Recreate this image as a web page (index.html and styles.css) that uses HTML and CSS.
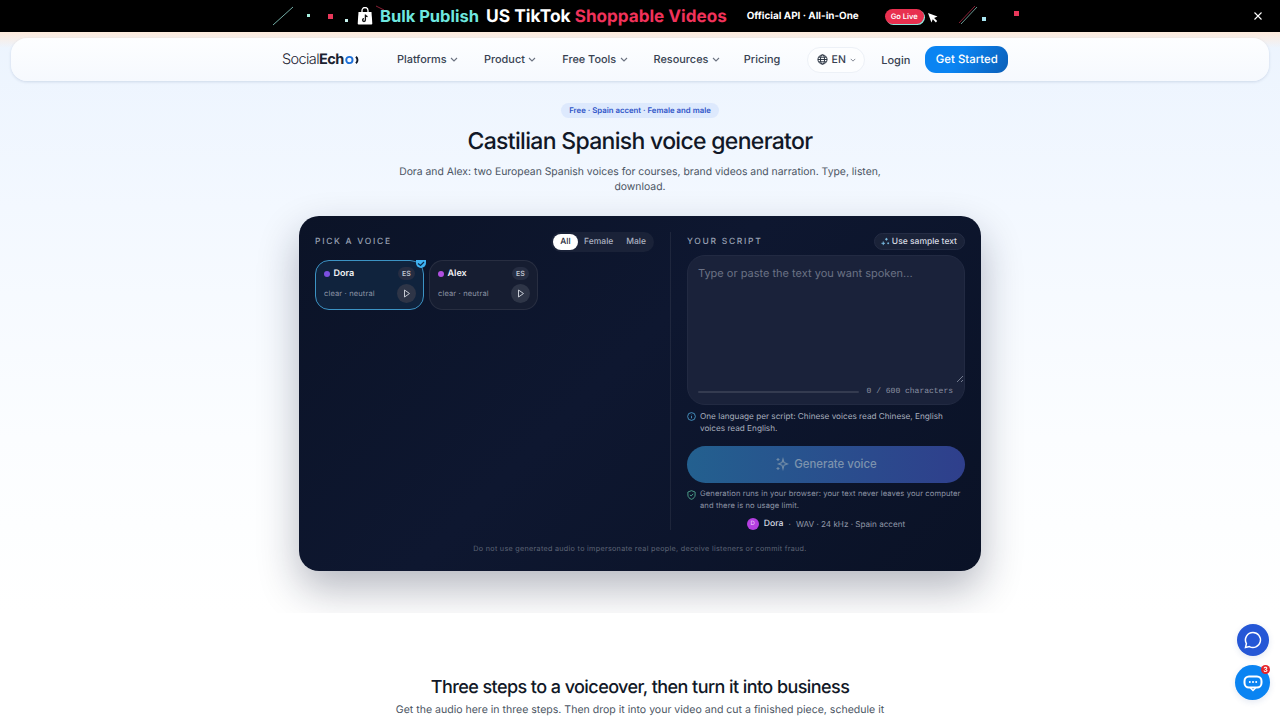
FILE: index.html
```html
<!DOCTYPE html>
<html lang="en">
  <head>
    <meta charset="UTF-8" />
    <meta name="viewport" content="width=device-width, initial-scale=1.0" />
    <title>Castilian Spanish voice generator</title>
    <link rel="stylesheet" href="styles.css">
  </head>
  <body>
    <div class="promo">
      <svg class="promo-decor" width="1280" height="32" viewBox="0 0 1280 32">
        <path d="M273 25L293 7" stroke="#8fd8cf" stroke-width="0.8"/>
        <path d="M376 6L384 10" stroke="#e8385a" stroke-width="0.6"/>
        <rect x="307" y="14" width="3" height="3" fill="#a8f0e0"/>
        <rect x="328" y="14" width="5" height="5" fill="#e8385a"/>
        <rect x="345" y="19" width="3" height="3" fill="#c8f4f0"/>
        <path d="M959 23L975 6" stroke="#e8385a" stroke-width="0.6"/>
        <path d="M961 24L977 7" stroke="#9ad8d0" stroke-width="0.7"/>
        <rect x="982" y="17" width="4" height="4" fill="#a8e4f0"/>
        <rect x="1014" y="11" width="5" height="5" fill="#e8385a"/>
      </svg>
      <div class="promo-inner">
        <svg class="promo-bag" width="16" height="18" viewBox="0 0 16 18">
          <path d="M5 5V3.5a3 3 0 0 1 6 0V5" fill="none" stroke="#fff" stroke-width="1.3"/>
          <path d="M1.500 5h13l.8 11.5a1 1 0 0 1-1 1H1.700a1 1 0 0 1-1-1z" fill="#fff"/>
          <path d="M8.400 7.500v5.600a1.400 1.400 0 1 1-1.400-1.400M8.400 7.500c.2 1.300 1 2 2.200 2.100" fill="none" stroke="#111" stroke-width="1.3"/>
        </svg>
        <span class="promo-title"><span class="teal">Bulk Publish</span> <span class="white">US TikTok</span> <span class="red">Shoppable Videos</span></span>
        <span class="promo-sub">Official API · All-in-One</span>
        <span class="promo-live">Go Live</span>
        <svg class="promo-cursor" width="10" height="10" viewBox="0 0 10 10">
          <path d="M0 0l9.500 3.600-3.400 1.300 3 3.200-1.200 1.300-3.100-3.200L3.400 9.500z" fill="#fff"/>
        </svg>
      </div>
      <svg class="promo-close" width="8" height="8" viewBox="0 0 8 8">
        <path d="M.5.5l7 7M7.500.5l-7 7" stroke="#fff" stroke-width="1.1"/>
      </svg>
    </div>

    <div class="hero-bg">
      <header class="nav">
        <div class="nav-inner">
          <div class="logo">Social<b>Ech</b><svg width="14" height="10" viewBox="0 0 16 10"><circle cx="5" cy="5" r="3.600" fill="none" stroke="#1d6fd8" stroke-width="2.200"/><path d="M12.500 1.200a5 5 0 0 1 0 7.600" fill="none" stroke="#0d1626" stroke-width="2.200"/></svg></div>
          <nav class="nav-links">
            <a class="nav-link">Platforms <svg class="chev" width="8" height="5" viewBox="0 0 8 5"><path d="M1 1l3 3 3-3"/></svg></a>
            <a class="nav-link">Product <svg class="chev" width="8" height="5" viewBox="0 0 8 5"><path d="M1 1l3 3 3-3"/></svg></a>
            <a class="nav-link">Free Tools <svg class="chev" width="8" height="5" viewBox="0 0 8 5"><path d="M1 1l3 3 3-3"/></svg></a>
            <a class="nav-link">Resources <svg class="chev" width="8" height="5" viewBox="0 0 8 5"><path d="M1 1l3 3 3-3"/></svg></a>
            <a class="nav-link">Pricing</a>
          </nav>
          <div class="lang">
            <svg width="11" height="11" viewBox="0 0 12 12" fill="none" stroke="#1f2937" stroke-width="1"><circle cx="6" cy="6" r="5"/><ellipse cx="6" cy="6" rx="2.200" ry="5"/><path d="M1 6h10M1.700 3.500h8.600M1.700 8.500h8.600"/></svg>
            EN
            <svg class="chev" width="6" height="4" viewBox="0 0 8 5"><path d="M1 1l3 3 3-3"/></svg>
          </div>
          <a class="login">Login</a>
          <a class="cta">Get Started</a>
        </div>
      </header>

      <section class="hero">
        <span class="badge">Free · Spain accent · Female and male</span>
        <h1>Castilian Spanish voice generator</h1>
        <p class="lead">Dora and Alex: two European Spanish voices for courses, brand videos and narration. Type, listen, download.</p>

        <div class="studio">
          <div class="studio-cols">
            <div class="col-left">
              <div class="col-head">
                <span class="label">PICK A VOICE</span>
                <div class="filter">
                  <span class="filter-item active">All</span>
                  <span class="filter-item">Female</span>
                  <span class="filter-item">Male</span>
                </div>
              </div>
              <div class="voices">
                <div class="voice selected">
                  <span class="voice-check"><svg width="8" height="6" viewBox="0 0 8 6"><path d="M1 2.500l2.500 2L7 1" fill="none" stroke="#0c2a4a" stroke-width="1.3"/></svg></span>
                  <div class="voice-row">
                    <span class="voice-name"><i class="dot violet"></i>Dora</span>
                    <span class="voice-tag">ES</span>
                  </div>
                  <div class="voice-row">
                    <span class="voice-desc">clear · neutral</span>
                    <span class="voice-play"><svg width="8" height="9" viewBox="0 0 8 9"><path d="M1.500 1l5 3.500-5 3.500z" fill="none" stroke="#c5cad3" stroke-width="1"/></svg></span>
                  </div>
                </div>
                <div class="voice">
                  <div class="voice-row">
                    <span class="voice-name"><i class="dot purple"></i>Alex</span>
                    <span class="voice-tag">ES</span>
                  </div>
                  <div class="voice-row">
                    <span class="voice-desc">clear · neutral</span>
                    <span class="voice-play"><svg width="8" height="9" viewBox="0 0 8 9"><path d="M1.500 1l5 3.500-5 3.500z" fill="none" stroke="#c5cad3" stroke-width="1"/></svg></span>
                  </div>
                </div>
              </div>
            </div>

            <div class="col-right">
              <div class="col-head">
                <span class="label">YOUR SCRIPT</span>
                <span class="sample">
                  <svg width="9" height="9" viewBox="0 0 10 10" fill="none" stroke="#7fc4ea" stroke-width="1"><path d="M6 1v3M4.500 2.500h3M2.500 5v4M.5 7h4M8 6v2M7 7h2"/></svg>
                  Use sample text
                </span>
              </div>
              <div class="script-box">
                <div class="placeholder">Type or paste the text you want spoken...</div>
                <div class="script-foot">
                  <span class="script-bar"></span>
                  <span class="script-count">0 / 600 characters</span>
                </div>
                <svg class="resize" width="8" height="8" viewBox="0 0 8 8"><path d="M1 7l6-6M5 7l2-2" stroke="#8a92a3" stroke-width="0.8"/></svg>
              </div>
              <div class="note">
                <svg width="9" height="9" viewBox="0 0 10 10" fill="none" stroke="#4fa6d8" stroke-width="0.9"><circle cx="5" cy="5" r="4.300"/><path d="M5 4.500v2.500M5 3v.6"/></svg>
                <span>One language per script: Chinese voices read Chinese, English voices read English.</span>
              </div>
              <button class="generate" type="button">
                <svg width="14" height="14" viewBox="0 0 14 14" fill="none" stroke="#6f8aa6" stroke-width="1.100"><path d="M8 2l1 3.500L12.500 7 9 8.200 8 12 7 8.200 3.500 7 7 5.500zM3 1v3M1.500 2.500h3M3 10v3M1.500 11.500h3"/></svg>
                Generate voice
              </button>
              <div class="note privacy">
                <svg width="9" height="10" viewBox="0 0 10 11" fill="none" stroke="#58b79a" stroke-width="0.9"><path d="M5 .7l4 1.500v3.300c0 2.400-1.700 4-4 4.800-2.300-.8-4-2.400-4-4.800V2.200z"/><path d="M3.200 5.300l1.400 1.300 2.300-2.400"/></svg>
                <span>Generation runs in your browser: your text never leaves your computer and there is no usage limit.</span>
              </div>
              <div class="summary">
                <span class="avatar">D</span>
                <span class="summary-name">Dora</span>
                <span class="summary-sep">·</span>
                <span>WAV · 24 kHz · Spain accent</span>
              </div>
            </div>
          </div>
          <p class="disclaimer">Do not use generated audio to impersonate real people, deceive listeners or commit fraud.</p>
        </div>
      </section>
    </div>

    <section class="steps">
      <h2>Three steps to a voiceover, then turn it into business</h2>
      <p>Get the audio here in three steps. Then drop it into your video and cut a finished piece, schedule it</p>
    </section>

    <a class="float-btn chat">
      <svg width="20" height="20" viewBox="0 0 20 20" fill="none" stroke="#fff" stroke-width="1.500"><path d="M10 2.500a7.500 7.500 0 1 1-3.600 14.100L2.500 17.500l.9-3.900A7.500 7.500 0 0 1 10 2.500z"/></svg>
    </a>
    <a class="float-btn support">
      <svg width="20" height="18" viewBox="0 0 20 18" fill="none"><rect x="1.500" y="2.500" width="17" height="11" rx="4.500" stroke="#fff" stroke-width="2"/><path d="M7.500 14l2.500 2.500 2.500-2.500" stroke="#fff" stroke-width="1.500"/><circle cx="6.800" cy="8" r="1" fill="#fff"/><circle cx="10" cy="8" r="1" fill="#fff"/><circle cx="13.200" cy="8" r="1" fill="#fff"/></svg>
      <span class="float-badge">3</span>
    </a>
  </body>
</html>
```

FILE: styles.css
```css
* {
  box-sizing: border-box;
}

html,
body {
  height: 720px;
  overflow: hidden;
}

body {
  margin: 0;
  background: #fff;
  font-family: Inter, "Noto Sans", sans-serif;
  color: #111827;
  text-rendering: geometricPrecision;
}

a {
  text-decoration: none;
}

/* promo strip */
.promo {
  position: relative;
  height: 32px;
  background: #000;
  color: #fff;
}

.promo-decor {
  position: absolute;
  top: 0;
  left: 0;
}

.promo-inner {
  height: 32px;
  padding-left: 357px;
  display: flex;
  align-items: center;
}

.promo-bag {
  margin-right: 7px;
}

.promo-title {
  font-size: 17px;
  font-weight: 700;
  white-space: nowrap;
}

.teal {
  font-size: 16.5px;
  color: #6ee7df;
}

.white {
  margin-left: 3px;
  font-size: 17.4px;
}

.red {
  font-size: 17.1px;
  color: #f0325a;
}

.promo-sub {
  margin-left: 20px;
  font-size: 9.9px;
  font-weight: 700;
}

.promo-live {
  margin-left: 26px;
  padding: 0 6px;
  height: 15px;
  line-height: 15px;
  border-radius: 8px;
  background: #e8304f;
  box-shadow: 1px 1px 0 #8fe6dc;
  font-size: 7.5px;
  font-weight: 600;
}

.promo-cursor {
  margin: 3px 0 0 4px;
}

.promo-close {
  position: absolute;
  top: 12px;
  right: 18px;
}

/* nav + hero background */
.hero-bg {
  height: 581px;
  overflow: hidden;
  background: linear-gradient(180deg, #ecf4fe 0%, #f3f8ff 30%, #fbfdff 70%, #fff 100%);
  position: relative;
}

.hero-bg::before {
  content: '';
  position: absolute;
  top: 0;
  left: 0;
  right: 0;
  height: 16px;
  background: linear-gradient(180deg, #fdeadb, rgba(253, 234, 219, 0));
}

.nav {
  position: relative;
  margin: 6px 11px 0;
  height: 43px;
  border-radius: 16px;
  background: linear-gradient(180deg, #fdfeff, #f6f9fe);
  box-shadow: 0 1px 3px rgba(40, 70, 120, 0.16);
}

.nav-inner {
  height: 100%;
  padding-left: 271px;
  display: flex;
  align-items: center;
}

.logo {
  width: 115px;
  display: flex;
  align-items: center;
  font-size: 14.5px;
  letter-spacing: -0.6px;
  color: #1a2230;
  font-weight: 300;
}

.logo b {
  font-weight: 700;
}

.logo svg {
  margin-left: 1px;
}

.nav-links {
  display: flex;
  gap: 25.9px;
  margin: -1px 27px 0 0;
}

.nav-link {
  display: flex;
  align-items: center;
  gap: 3.5px;
  font-size: 10.9px;
  font-weight: 500;
  color: #374151;
}

.nav-link:last-child {
  margin-left: -2px;
}

.chev {
  fill: none;
  stroke: #6b7280;
  stroke-width: 1.1;
}

.lang {
  width: 58px;
  height: 26px;
  display: flex;
  align-items: center;
  justify-content: center;
  gap: 4px;
  border-radius: 13px;
  background: #fdfeff;
  border: 1px solid #edf1f7;
  font-size: 10.5px;
  font-weight: 500;
  color: #374151;
}

.login {
  margin-left: 16px;
  font-size: 11px;
  font-weight: 500;
  color: #374151;
}

.cta {
  margin-left: 15px;
  width: 83px;
  height: 27px;
  line-height: 27px;
  text-align: center;
  border-radius: 11px;
  background: linear-gradient(120deg, #0a84f2 40%, #0b5fb8);
  color: #fff;
  font-size: 11.4px;
  font-weight: 500;
}

/* hero */
.hero {
  display: flex;
  flex-direction: column;
  align-items: center;
  padding-top: 22px;
}

.badge {
  height: 15px;
  line-height: 15px;
  padding: 0 8px;
  border-radius: 8px;
  background: #dde9fd;
  color: #2f55c8;
  font-size: 7.8px;
  font-weight: 600;
}

h1 {
  margin: 8px 0 0;
  font-size: 23px;
  line-height: 30px;
  font-weight: 500;
  letter-spacing: -0.69px;
  color: #111827;
}

.lead {
  width: 500px;
  margin: 8px 0 0;
  font-size: 10.4px;
  line-height: 15px;
  text-align: center;
  color: #4b5563;
}

/* dark card */
.studio {
  width: 682px;
  height: 355px;
  margin-top: 22px;
  padding: 16px 16px 0;
  border-radius: 20px;
  background: linear-gradient(135deg, #0b1327 0%, #0e1730 45%, #0a1226 100%);
  box-shadow: 0 18px 40px rgba(15, 23, 50, 0.3);
  color: #d1d5db;
}

.studio-cols {
  display: flex;
  height: 298px;
}

.col-left {
  width: 356px;
  padding-right: 16px;
  border-right: 1px solid rgba(255, 255, 255, 0.07);
}

.col-right {
  flex: 1;
  padding-left: 16px;
}

.col-head {
  display: flex;
  align-items: center;
  justify-content: space-between;
  height: 19px;
}

.label {
  font-size: 8.5px;
  font-weight: 500;
  letter-spacing: 1.7px;
  color: #98a1b3;
}

.filter {
  display: flex;
  align-items: center;
  height: 20px;
  margin-bottom: -1px;
  padding: 2px 1.5px 2px 2px;
  border-radius: 10px;
  background: #1a2238;
}

.filter-item {
  height: 16px;
  line-height: 16px;
  padding: 0 6.5px;
  border-radius: 8px;
  font-size: 8.5px;
  font-weight: 500;
  color: #aab1c0;
}

.filter-item.active {
  padding: 0 7px;
  background: #fff;
  color: #1f2937;
}

.voices {
  display: flex;
  gap: 5px;
  margin-top: 9px;
}

.voice {
  position: relative;
  width: 109px;
  height: 50px;
  padding: 6px 8px 0;
  border-radius: 14px;
  border: 1px solid rgba(255, 255, 255, 0.08);
  background: #161d31;
}

.voice.selected {
  border-color: #3c93c4;
  background: #10233d;
}

.voice-check {
  position: absolute;
  top: -1px;
  right: -3px;
  width: 10px;
  height: 8px;
  display: flex;
  align-items: center;
  justify-content: center;
  border-radius: 0 0 5px 5px;
  background: #3fb2f2;
}

.voice-row {
  display: flex;
  align-items: center;
  justify-content: space-between;
  height: 13px;
}

.voice-row + .voice-row {
  margin-top: 7px;
}

.voice-name {
  display: flex;
  align-items: center;
  gap: 3.5px;
  font-size: 9px;
  font-weight: 600;
  color: #f3f4f6;
}

.dot {
  width: 6px;
  height: 6px;
  border-radius: 50%;
}

.dot.violet {
  background: #7c4fe0;
}

.dot.purple {
  background: #b04fe0;
}

.voice-tag {
  width: 17px;
  height: 13px;
  line-height: 13px;
  text-align: center;
  border-radius: 7px;
  background: #262d42;
  font-size: 7px;
  font-weight: 600;
  color: #c0c5d0;
}

.voice-desc {
  font-size: 7.5px;
  letter-spacing: 0.15px;
  color: #8d94a5;
}

.voice-play {
  width: 19px;
  height: 19px;
  margin-right: -1px;
  display: flex;
  align-items: center;
  justify-content: center;
  border-radius: 50%;
  background: #2e3547;
}

.sample {
  display: flex;
  align-items: center;
  gap: 2px;
  height: 17px;
  padding: 0 7px 0 6px;
  border-radius: 9px;
  background: #1a2238;
  border: 1px solid #242c44;
  font-size: 8.5px;
  font-weight: 500;
  color: #d6dae2;
}

.script-box {
  position: relative;
  height: 150px;
  margin-top: 4px;
  padding: 10px 10px 0;
  border-radius: 18px;
  background: #1a223a;
  border: 1px solid #222a42;
}

.placeholder {
  font-size: 11px;
  line-height: 15px;
  color: #6b7285;
}

.script-foot {
  position: absolute;
  left: 10px;
  right: 11px;
  bottom: 8px;
  display: flex;
  align-items: center;
  gap: 8px;
}

.script-bar {
  flex: 1;
  height: 2px;
  border-radius: 1px;
  background: #343b50;
}

.script-count {
  font-family: "Liberation Mono", monospace;
  font-size: 8px;
  color: #8a91a2;
}

.resize {
  position: absolute;
  right: 0;
  bottom: 21px;
}

.note {
  display: flex;
  gap: 4px;
  margin-top: 5px;
  font-size: 8.2px;
  line-height: 12px;
  color: #a8afbd;
}

.note svg {
  flex: none;
  margin-top: 2px;
}

.generate {
  width: 100%;
  height: 37px;
  margin-top: 12px;
  padding: 0 0 1px;
  display: flex;
  align-items: center;
  justify-content: center;
  gap: 5px;
  border: none;
  border-radius: 19px;
  background: linear-gradient(90deg, #23608f, #2f3f8c);
  font-family: inherit;
  font-size: 11.4px;
  font-weight: 500;
  color: #7d93ad;
}

.privacy {
  margin-top: 5px;
  font-size: 7.6px;
  letter-spacing: 0.1px;
  color: #8d94a5;
}

.summary {
  display: flex;
  align-items: center;
  justify-content: center;
  gap: 5px;
  margin-top: 6px;
  font-size: 8.15px;
  color: #9198a8;
}

.avatar {
  width: 12px;
  height: 12px;
  line-height: 12px;
  text-align: center;
  border-radius: 50%;
  background: #b43fe0;
  font-size: 6px;
  color: #f0d0ff;
}

.summary-name {
  font-size: 8.7px;
  color: #d6dae2;
  font-weight: 500;
}

.disclaimer {
  margin: 14px 0 0;
  text-align: center;
  font-size: 7.2px;
  letter-spacing: 0.3px;
  color: #5d6475;
}

/* next section */
.steps {
  padding-top: 64px;
  text-align: center;
}

.steps h2 {
  margin: 0;
  font-size: 18px;
  line-height: 22px;
  font-weight: 500;
  letter-spacing: -0.57px;
  color: #111827;
}

.steps p {
  margin: 3px 0 0;
  font-size: 10.55px;
  line-height: 16px;
  color: #4b5563;
}

/* floating buttons */
.float-btn {
  position: fixed;
  display: flex;
  align-items: center;
  justify-content: center;
  border-radius: 50%;
  box-shadow: 0 2px 6px rgba(30, 70, 160, 0.12);
}

.chat {
  top: 624px;
  left: 1237px;
  width: 32px;
  height: 32px;
  background: #2557d6;
}

.support {
  top: 665px;
  left: 1235px;
  width: 35px;
  height: 35px;
  background: #0a84f2;
}

.float-badge {
  position: absolute;
  top: 0;
  right: 0;
  width: 9px;
  height: 9px;
  line-height: 9px;
  text-align: center;
  border-radius: 50%;
  background: #e5242a;
  color: #fff;
  font-size: 7px;
  font-weight: 700;
}
```
